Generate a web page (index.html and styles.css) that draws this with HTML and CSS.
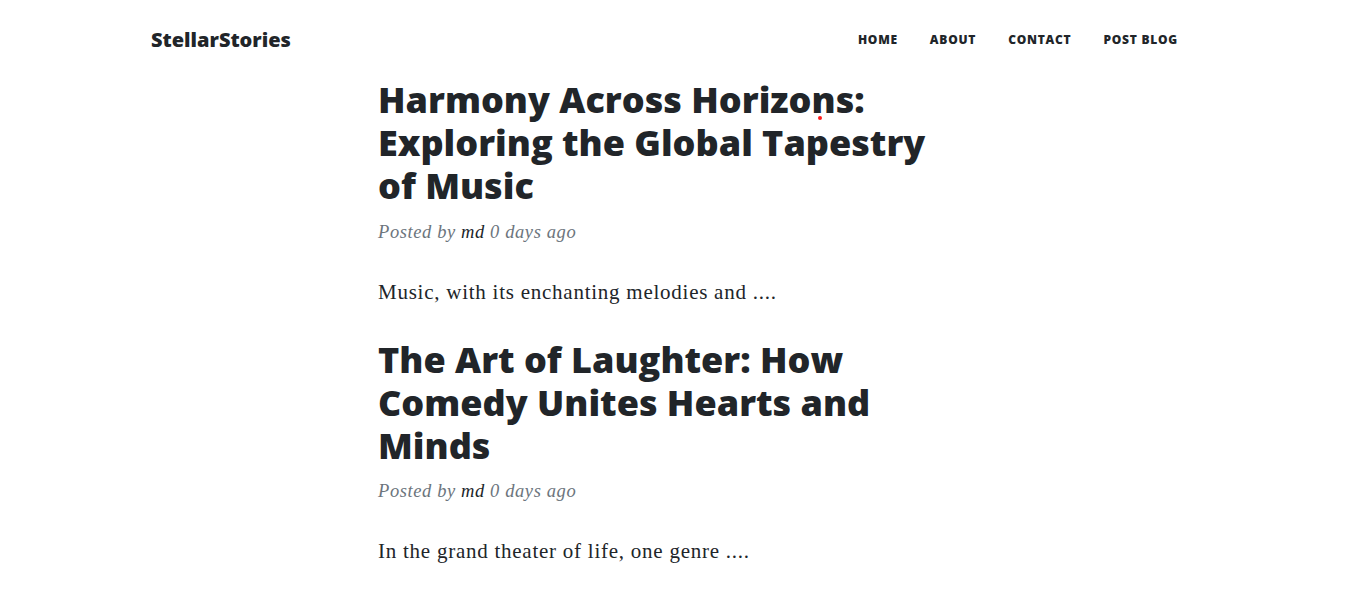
FILE: index.html
```html
<!DOCTYPE html>
<html lang="en">
<head>
<meta charset="utf-8">
<title>StellarStories</title>
<link rel="stylesheet" href="styles.css">
</head>
<body>
<nav class="navbar">
  <a class="brand" href="#">StellarStories</a>
  <ul class="nav-links">
    <li><a href="#">Home</a></li>
    <li><a href="#">About</a></li>
    <li><a href="#">Contact</a></li>
    <li><a href="#">Post Blog</a></li>
  </ul>
</nav>
<main class="content">
  <article class="post-preview">
    <a href="#" class="post-link"><h2 class="post-title">Harmony Across Horizons: Exploring the Global Tapestry of Music</h2></a>
    <p class="post-meta">Posted by <a href="#">md</a> 0 days ago</p>
    <p class="post-excerpt">Music, with its enchanting melodies and ....</p>
  </article>
  <article class="post-preview">
    <a href="#" class="post-link"><h2 class="post-title">The Art of Laughter: How Comedy Unites Hearts and Minds</h2></a>
    <p class="post-meta">Posted by <a href="#">md</a> 0 days ago</p>
    <p class="post-excerpt">In the grand theater of life, one genre ....</p>
  </article>
</main>
<span class="dot"></span>
</body>
</html>
```

FILE: styles.css
```css
html, body {
  margin: 0;
  padding: 0;
  background: #fff;
  color: #212529;
}

body {
  font-family: "Liberation Serif", serif;
  position: relative;
}

a {
  color: #212529;
  text-decoration: none;
}

.navbar {
  height: 78px;
  display: flex;
  align-items: center;
  justify-content: space-between;
  padding: 0 151px;
  box-sizing: border-box;
}

.brand {
  font-family: "Open Sans", sans-serif;
  font-weight: 800;
  font-size: 20px;
  color: #212529;
}

.nav-links {
  list-style: none;
  display: flex;
  margin: 0;
  padding: 0;
}

.nav-links a {
  display: block;
  padding: 0 16px;
  font-family: "Open Sans", sans-serif;
  font-weight: 800;
  font-size: 12px;
  letter-spacing: 0.75px;
  text-transform: uppercase;
  color: #212529;
}

.content {
  width: 589px;
  margin: 0 auto;
}

.post-title {
  margin: 0 0 11px;
  font-family: "Open Sans", sans-serif;
  font-weight: 800;
  font-size: 36px;
  line-height: 1.2;
  color: #212529;
}

.post-meta {
  margin: 0;
  font-size: 18.5px;
  line-height: 27px;
  letter-spacing: 0.6px;
  font-style: italic;
  color: #6c757d;
}

.post-meta a {
  color: #212529;
}

.post-excerpt {
  margin: 31px 0;
  font-size: 21px;
  line-height: 30px;
  letter-spacing: 0.75px;
  color: #212529;
}

.dot {
  position: absolute;
  left: 818px;
  top: 116px;
  width: 4px;
  height: 4px;
  border-radius: 50%;
  background: #ff1a1a;
}
```
